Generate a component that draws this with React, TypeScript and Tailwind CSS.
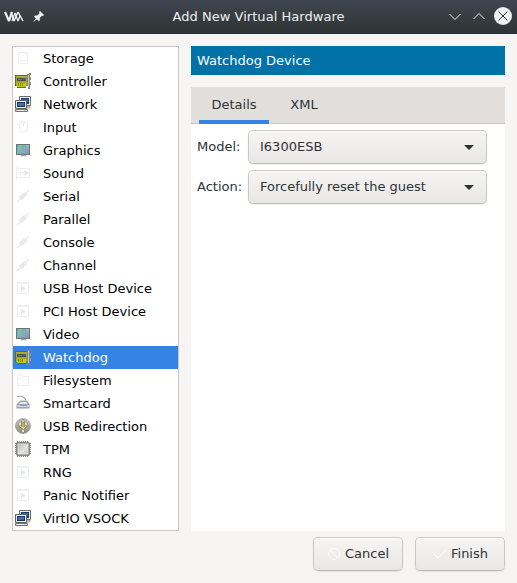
import React from "react";

type Kind =
  | "storage" | "card" | "network" | "mouse" | "monitor" | "sound" | "plug"
  | "play" | "folder" | "smartcard" | "usb" | "chip";

const devices: { name: string; icon: Kind }[] = [
  { name: "Storage", icon: "storage" },
  { name: "Controller", icon: "card" },
  { name: "Network", icon: "network" },
  { name: "Input", icon: "mouse" },
  { name: "Graphics", icon: "monitor" },
  { name: "Sound", icon: "sound" },
  { name: "Serial", icon: "plug" },
  { name: "Parallel", icon: "plug" },
  { name: "Console", icon: "plug" },
  { name: "Channel", icon: "plug" },
  { name: "USB Host Device", icon: "play" },
  { name: "PCI Host Device", icon: "play" },
  { name: "Video", icon: "monitor" },
  { name: "Watchdog", icon: "card" },
  { name: "Filesystem", icon: "folder" },
  { name: "Smartcard", icon: "smartcard" },
  { name: "USB Redirection", icon: "usb" },
  { name: "TPM", icon: "chip" },
  { name: "RNG", icon: "play" },
  { name: "Panic Notifier", icon: "play" },
  { name: "VirtIO VSOCK", icon: "network" },
];

const faint = "#eeeff0";

const glyphs: Record<Kind, React.ReactNode> = {
  storage: (
    <g fill="none" stroke={faint}>
      <path d="M3.5 2.5h9v11h-9zM3.5 10.5h9M5 2v2M11 2v2M6 12.5h1M9 12.5h1" />
    </g>
  ),
  card: (
    <g>
      <path d="M0 2h13v11h-2v2H2v-2H0z" fill="#656d12" />
      <path d="M1 3h11v10H1z" fill="#a3ad10" />
      <path d="M1 3h11v1H1z" fill="#aab52c" />
      <path d="M2 5h9v3H2z" fill="#4b5151" />
      <path d="M3 6h4v1H3z" fill="#737c80" />
      <path d="M8 5h3v2H8z" fill="#466579" />
      <path d="M2 10h9v4H2z" fill="#c0c91b" />
      <path d="M3 10h1v3H3zM5 10h1v3H5zM7 10h1v3H7z" fill="#7b850f" />
      <path d="M12 1h2V0h2v2h-1v14h-2v-3h-1z" fill="#838580" />
      <path d="M13 2h1v12h-1z" fill="#c4c6c1" />
      <path d="M15 4h1v3h-1zM15 9h1v3h-1z" fill="#999b96" />
    </g>
  ),
  network: (
    <g>
      <path d="M4.500 .5h11v9h-11z" fill="#eeeeec" stroke="#696b68" />
      <path d="M6 2h8v6H6z" fill="#173d75" />
      <path d="M7 3h6v3H7z" fill="#3765a4" />
      <path d="M11 10h4v2h-4z" fill="#c6c8c3" stroke="#777974" strokeWidth=".5" />
      <path d="M.5 4.500h11v8H.5z" fill="#eeeeec" stroke="#60625f" />
      <path d="M2 6h8v5H2z" fill="#15386d" />
      <path d="M3 7h6v3H3z" fill="#3767a8" />
      <path d="M3 8l5-1h1v1L3 10z" fill="#5682b9" opacity=".5" />
      <path d="M.5 13.500h12v2H.5z" fill="#d3d7cf" stroke="#737570" />
      <path d="M2 14h7v1H2z" fill="#f4f4f2" />
    </g>
  ),
  mouse: (
    <g fill="none" stroke="#e9eaeb">
      <rect x="4.5" y="2.5" width="8" height="11" rx="4" />
      <path d="M8.500 4v3" />
    </g>
  ),
  monitor: (
    <g>
      <path d="M1 2h14v11H1z" fill="#6d7380" />
      <path d="M2 3h12v9H2z" fill="url(#screen)" />
      <path d="M3 3h5L3 10zM10 3h4v4z" fill="#96cf8a" opacity=".6" />
      <path d="M7 12l3-7 4 5v2z" fill="#a38fc4" opacity=".35" />
      <path d="M6 13h5v1H6z" fill="#b1b2af" />
      <path d="M5 14h7v1H5z" fill="#dededd" />
    </g>
  ),
  sound: (
    <g fill="none" stroke={faint}>
      <path d="M1.500 2v12M2 3.500h12.500v9H2" />
      <path d="M3.500 7.500h4M5.500 6v4M8 8h6" />
      <path d="M10.500 5.500L13 8l-2.500 2.500L8 8z" fill="#e6e8e9" stroke="#e6e8e9" />
    </g>
  ),
  plug: (
    <g fill="none" stroke="#e6e8ea">
      <path d="M5.500 10.500l5-5" strokeWidth="4.200" />
      <path d="M2 14l3-3M11 5l3-3" strokeWidth="1.300" />
      <path d="M3.500 9l3.500 3.500M9 3.500l3.500 3.500" strokeWidth=".8" />
    </g>
  ),
  play: (
    <g>
      <path d="M2.500 2.500h11v11h-11zM2 3.500h12" fill="none" stroke={faint} />
      <path d="M6 5.500l5 3-5 3z" fill="#e5e6e7" />
    </g>
  ),
  folder: (
    <path d="M2.500 13.500v-11h5v2h6v9zM2.500 6.500h4l1-2" fill="none" stroke="#efefef" />
  ),
  smartcard: (
    <g>
      <path d="M2 1.500c5-1 8 1 9 4" fill="none" stroke="#9b9d9a" strokeWidth="1.100" />
      <path d="M1 10l4-4.500h7l3 4.500v2l-1 1H2l-1-1z" fill="#b4b6b3" />
      <path d="M2.500 9.500L6 6.500h5.500l2 3z" fill="#ececeb" stroke="#8b8d89" strokeWidth=".7" />
      <path d="M1 10h14v2H1z" fill="#cfd1ce" />
      <path d="M5 9.500h7v2H5z" fill="#7ea5d2" />
      <path d="M5 11h7v1H5z" fill="#d0e0f1" />
      <path d="M1.500 13h13" stroke="#8f918e" strokeWidth=".9" />
    </g>
  ),
  usb: (
    <g>
      <circle cx="8" cy="8" r="7.600" fill="url(#usbdisc)" stroke="#969895" strokeWidth=".6" />
      <path d="M8 3v11M8 10L5 8V5M8 11l3-3V5" fill="none" stroke="#66675d" strokeWidth="2.400" />
      <path d="M8 3v11M8 10L5 8V5M8 11l3-3V5" fill="none" stroke="#f0dc7c" strokeWidth="1.200" />
      <path d="M6 4l2-3 2 3z" fill="#f5e796" stroke="#66675d" strokeWidth=".5" />
      <path d="M4 5h2v2H4zM10 5h2v2h-2zM7 12h2v2H7z" fill="#eee0a0" />
    </g>
  ),
  chip: (
    <g>
      <path d="M2 1h12M2 15h12M1 2v12M15 2v12" stroke="#7e807d" strokeWidth="2" strokeDasharray="1 1" />
      <rect x="1.5" y="1.5" width="13" height="13" rx="1" fill="#8d8f8c" stroke="#858784" />
      <rect x="3" y="3" width="10" height="10" fill="url(#chipface)" stroke="#f0f0ef" strokeWidth=".7" />
    </g>
  ),
};

function DeviceIcon({ kind }: { kind: Kind }) {
  return (
    <svg className="-mt-px size-4 shrink-0" viewBox="0 0 16 16">
      {glyphs[kind]}
    </svg>
  );
}

function Gradients() {
  return (
    <svg className="absolute size-0" aria-hidden="true">
      <defs>
        <linearGradient id="screen" x1="0" y1="0" x2="1" y2="1">
          <stop offset="0" stopColor="#5aa0bd" />
          <stop offset=".5" stopColor="#7db6b2" />
          <stop offset="1" stopColor="#8e8fc0" />
        </linearGradient>
        <linearGradient id="usbdisc" x1="0" y1="0" x2="0" y2="1">
          <stop offset="0" stopColor="#c2c3c1" />
          <stop offset="1" stopColor="#8e908e" />
        </linearGradient>
        <linearGradient id="chipface" x1="0" y1="0" x2="1" y2="1">
          <stop offset="0" stopColor="#b7b8b7" />
          <stop offset=".6" stopColor="#e3e3e2" />
          <stop offset="1" stopColor="#c3c4c2" />
        </linearGradient>
      </defs>
    </svg>
  );
}

function TitleBar() {
  return (
    <header className="flex h-[34px] shrink-0 items-center border-b border-[#292d31] bg-linear-to-b from-[#40464f] to-[#2f3437] pr-1 pl-1 text-[#eff0f1]">
      <div className="flex w-[90px] items-center">
        <svg className="h-3 w-5" viewBox="0 0 20 12" fill="none" stroke="#eff0f1" strokeLinejoin="bevel">
          <path d="M1 1l4 9 3-9" strokeWidth="2.200" />
          <path d="M7 1l3 9 4-9 5 9" strokeWidth="1.500" />
          <path d="M8 10l3-8 3 8 2-5" strokeWidth="1.300" />
        </svg>
        <svg className="ml-2 size-[13px]" viewBox="0 0 13 13" fill="#eff0f1">
          <path d="M8 1l4 4-1 1-1-.3-2.300 2.300.1 2.200-1 1L2 6.500l1-1 2.300.1L7.500 3.300 7 2z" />
          <path d="M1 12.200l3.500-4.700 1.200 1.200z" />
        </svg>
      </div>
      <h1 className="flex-1 text-center tracking-[0.04px]">Add New Virtual Hardware</h1>
      <div className="flex w-[90px] justify-end">
        <svg className="-mt-0.5 h-5 w-[68px]" viewBox="0 0 68 20" fill="none" stroke="#eff0f1">
          <path d="M4.500 8l5.500 5.500L15.500 8M28.500 13L34 7.500l5.500 5.500" />
          <circle cx="58" cy="10" r="9" fill="#eff0f1" stroke="none" />
          <path d="M53.500 5.500l9 9M62.500 5.500l-9 9" stroke="#30353a" />
        </svg>
      </div>
    </header>
  );
}

function Combo({ label, value }: { label: string; value: string }) {
  return (
    <div className="flex h-[34px] items-center">
      <label className="w-[51px] shrink-0 pb-0.5">{label}</label>
      <button className="flex h-[34px] w-[239px] items-center justify-between rounded-[5px] border border-[#cdc7c2] border-b-[#bfb8b1] bg-linear-to-b from-[#f6f5f4] to-[#e9e7e6] pr-3 pl-[11px] shadow-[0_1px_2px_rgba(0,0,0,0.07),inset_0_1px_#fff]">
        <span className="pb-0.5 whitespace-pre">{value}</span>
        <svg className="mt-px h-[5px] w-[10px]" viewBox="0 0 10 5">
          <path d="M0 0h10L5 5z" fill="#2e3436" />
        </svg>
      </button>
    </div>
  );
}

function ActionButton({ label, cancel = false }: { label: string; cancel?: boolean }) {
  return (
    <button
      className={
        "flex h-[34px] w-[90px] items-center justify-end rounded-[5px] border border-[#cdc7c2] border-b-[#bfb8b1] bg-linear-to-b from-[#f6f5f4] to-[#e9e7e6] shadow-[0_1px_2px_rgba(0,0,0,0.07),inset_0_1px_#fff] " +
        (cancel ? "pr-[13px]" : "pr-4")
      }
    >
      <svg className="mr-[3px] size-4" viewBox="0 0 16 16" fill="none" stroke="#fcfcfc">
        {cancel ? (
          <>
            <circle cx="8" cy="8" r="5.5" />
            <path d="M4 4l8 8" />
          </>
        ) : (
          <path d="M2 8l4 4 8-8" />
        )}
      </svg>
      <span className="pb-0.5">{label}</span>
    </button>
  );
}

export default function App() {
  return (
    <div className="flex h-[583px] w-[517px] flex-col overflow-hidden bg-[#f6f5f4] font-['DejaVu_Sans',sans-serif] text-[13px] leading-[15px] text-[#2e3436]">
      <Gradients />
      <TitleBar />
      <main className="flex h-[497px] shrink-0 gap-3 px-3 pt-3">
        <ul className="h-[485px] w-[167px] shrink-0 border border-[#cdc7c2] bg-white text-black">
          {devices.map(({ name, icon }) => (
            <li
              key={name}
              className={
                "flex h-[23px] items-center gap-3 pl-0.5 whitespace-nowrap " +
                (name === "Watchdog" ? "bg-[#3584e4] text-white" : "")
              }
            >
              <DeviceIcon kind={icon} />
              <span>{name}</span>
            </li>
          ))}
        </ul>
        <section className="flex w-[314px] flex-col gap-3">
          <h2 className="flex h-[29px] shrink-0 items-center bg-[#0072a8] pl-1.5 text-white">Watchdog Device</h2>
          <div className="flex flex-1 flex-col bg-white">
            <nav className="flex h-[37px] shrink-0 border-b border-[#cdc7c2] bg-[#e1dedb] px-2">
              <button className="-mb-px h-[37px] w-[70px] border-b-4 border-[#3584e4] pt-0.5">Details</button>
              <button className="h-[36px] w-[70px] pb-0.5">XML</button>
            </nav>
            <div className="flex flex-col gap-1.5 px-1.5 pt-1.5">
              <Combo label="Model:" value="I6300ESB" />
              <Combo label="Action:" value="Forcefully reset the guest" />
            </div>
          </div>
        </section>
      </main>
      <footer className="flex justify-end gap-3 px-3 pt-1.5">
        <ActionButton label="Cancel" cancel />
        <ActionButton label="Finish" />
      </footer>
    </div>
  );
}
